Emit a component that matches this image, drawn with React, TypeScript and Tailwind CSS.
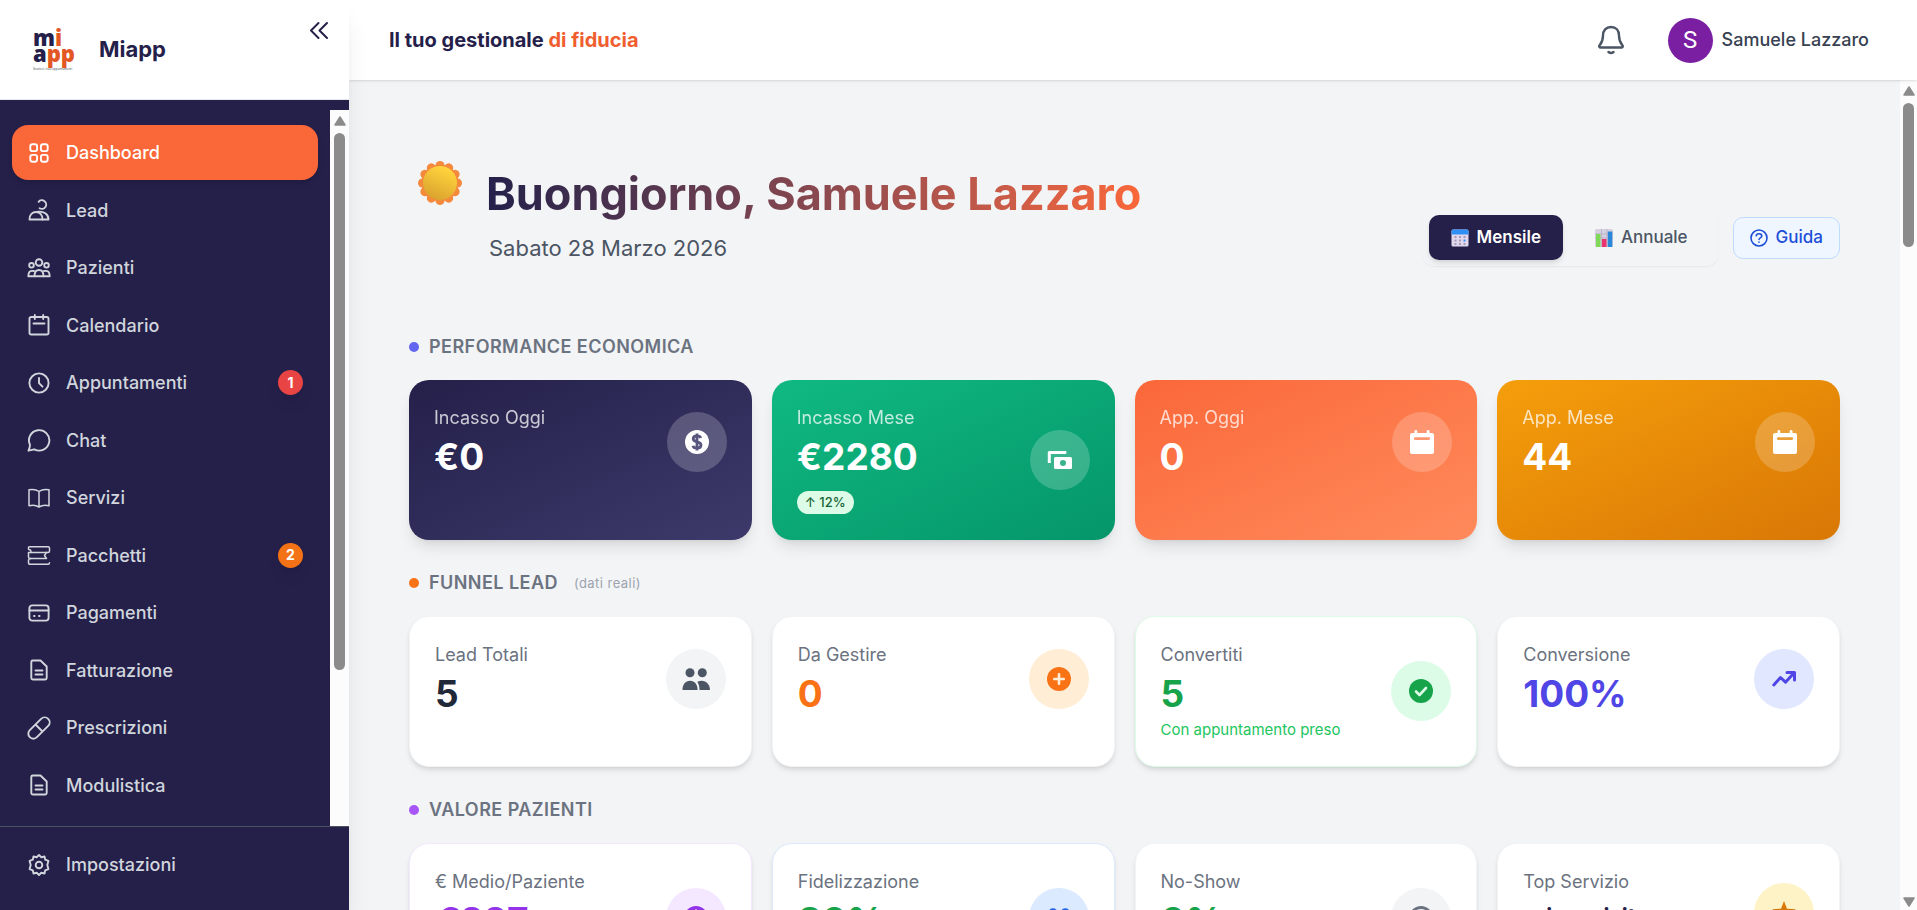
import type { ReactNode } from 'react'

function NavIcon({ children }: { children: ReactNode }) {
    return (
        <svg viewBox="0 0 24 24" className="w-6 h-6 shrink-0" fill="none" stroke="currentColor" strokeWidth="1.9" strokeLinecap="round" strokeLinejoin="round" aria-hidden="true">
            {children}
        </svg>
    )
}

const docIcon = (
    <>
        <path d="M5.8 2.5h7.7l6.2 6V20a1.5 1.5 0 0 1-1.5 1.5H5.8A1.5 1.5 0 0 1 4.3 20V4a1.5 1.5 0 0 1 1.5-1.5z" />
        <path d="M8.5 12.5h7M8.5 16.5h7" />
    </>
)

const menu: { label: string, icon: ReactNode, active?: boolean, badge?: string, badgeClass?: string }[] = [
    {
        label: 'Dashboard', active: true, icon: (
            <>
                <rect x="3.3" y="3.3" width="6.8" height="6.8" rx="2.2" />
                <rect x="13.9" y="3.3" width="6.8" height="6.8" rx="2.2" />
                <rect x="3.3" y="13.9" width="6.8" height="6.8" rx="2.2" />
                <rect x="13.9" y="13.9" width="6.8" height="6.8" rx="2.2" />
            </>
        )
    },
    {
        label: 'Lead', icon: (
            <>
                <path d="M11.6 3.8A4.3 4.3 0 1 1 12.6 10.2" />
                <path d="M2.5 21.5c0-4.8 3-7.5 6.5-7.5s6.5 2.7 6.5 7.5z" />
                <path d="M11 13.7c5.5-.6 10.5 2.2 10.5 7.8h-6" />
            </>
        )
    },
    {
        label: 'Pazienti', icon: (
            <>
                <circle cx="12" cy="6.5" r="3.3" />
                <circle cx="4.5" cy="9.3" r="2.3" />
                <circle cx="19.5" cy="9.3" r="2.3" />
                <path d="M7.5 20.3c0-4.3 1.2-6.3 4.5-6.3s4.5 2 4.5 6.3" />
                <path d="M7 15c-4.5-.8-5.7 1.3-5.7 5.3h21.4c0-4-1.2-6.1-5.7-5.3" />
            </>
        )
    },
    {
        label: 'Calendario', icon: (
            <>
                <rect x="2.5" y="4" width="19" height="17.5" rx="1.8" />
                <path d="M7.8 2v4M16.2 2v4M6.5 10.5h11" />
            </>
        )
    },
    {
        label: 'Appuntamenti', badge: '1', badgeClass: 'bg-[#e94444]', icon: (
            <>
                <circle cx="12" cy="12" r="9.6" />
                <path d="M12 7v5.2l3.5 3.5" />
            </>
        )
    },
    { label: 'Chat', icon: <path d="M3 16.8A10.2 10.2 0 1 1 7.3 21.3L1.5 22.7c.8-1.8 1.5-4 1.5-5.9z" /> },
    {
        label: 'Servizi', icon: (
            <path strokeWidth="1.5" d="M12 5.5C9 3.3 5.5 3 2 3.8v16c3.5-1 7-.7 10 1.2 3-1.9 6.5-2.2 10-1.2v-16c-3.5-.8-7-.5-10 1.7zm0 0V21" />
        )
    },
    {
        label: 'Pacchetti', badge: '2', badgeClass: 'bg-[#f47216]', icon: (
            <g strokeWidth="1.5">
                <path d="M2.5 3.7H21a1.5 1.5 0 0 1 1.5 1.5v2.7A1.5 1.5 0 0 1 21 9.4H4C4 7.5 3.6 6.8 2.5 6.8 1 6.8 1 3.7 2.5 3.7z" />
                <path d="M4 9.4H1.5V14A1.5 1.5 0 0 0 3 15.5h16.5l-2-3 2-3.1" />
                <path d="M4 15.5c-1.7 0-2.5.7-2.5 2.2v2.1A1.5 1.5 0 0 0 3 21.3h18a1.5 1.5 0 0 0 1.5-1.5" />
            </g>
        )
    },
    {
        label: 'Pagamenti', icon: (
            <>
                <rect x="2.4" y="4.4" width="19.2" height="15.2" rx="2.8" />
                <path d="M2.5 9.5h19M7 15h.6M12 15h.6" />
            </>
        )
    },
    { label: 'Fatturazione', icon: docIcon },
    {
        label: 'Prescrizioni', icon: (
            <path d="M2.8 21.2a5 5 0 0 1 0-7.1L14.1 2.8a5 5 0 0 1 7.1 7.1L9.9 21.2a5 5 0 0 1-7.1 0zM8.5 8.5l7 7" />
        )
    },
    { label: 'Modulistica', icon: docIcon },
]

function MiappLogo() {
    return (
        <div className="w-[42px] shrink-0 flex flex-col whitespace-nowrap font-['Open_Sans','Noto_Sans',sans-serif] text-[#24204a]">
            <span className="text-[22px] leading-4 font-extrabold">m<span className="text-[#e25724]">i</span></span>
            <span className="text-[22px] leading-4 font-extrabold">a<span className="text-[#e25724]">pp</span></span>
            <span className="mt-[6px] text-[3px] leading-1 text-gray-700">Gestisci i tuoi appuntamenti</span>
        </div>
    )
}

function Sidebar() {
    return (
        <aside className="w-[349px] shrink-0 flex flex-col bg-[#24204a] shadow-xl z-10">
            <div className="h-[100px] shrink-0 flex items-center bg-white border-b border-gray-200 pl-[33px] pr-5">
                <MiappLogo />
                <span className="ml-6 flex-1 text-[22px] font-bold text-[#24204a]">Miapp</span>
                <button type="button" aria-label="Comprimi menu" className="self-start mt-[21px] text-[#24204a]">
                    <svg viewBox="0 0 20 20" className="w-5 h-5" fill="none" stroke="currentColor" strokeWidth="2" strokeLinecap="round" strokeLinejoin="round" aria-hidden="true">
                        <path d="M9.500 2 2 9.500 9.500 17M18 2l-7.500 7.500L18 17" />
                    </svg>
                </button>
            </div>
            <div className="flex-1 min-h-0 flex pt-[10px]">
                <nav className="flex-1 min-w-0 overflow-hidden px-3 pt-[15px] pb-[13px] flex flex-col justify-between">
                    {menu.map((item) => (
                        <a key={item.label} href="#" className={`h-[55px] shrink-0 flex items-center gap-[15px] px-[15px] rounded-2xl text-[18px] font-medium ${item.active ? 'bg-[#fa6739] text-white shadow-md' : 'text-gray-300'}`}>
                            <NavIcon>{item.icon}</NavIcon>
                            <span className="flex-1">{item.label}</span>
                            {item.badge && (
                                <span className={`w-[25px] h-[25px] flex items-center justify-center rounded-full text-sm font-bold text-white shadow-lg ${item.badgeClass}`}>{item.badge}</span>
                            )}
                        </a>
                    ))}
                </nav>
                <Scrollbar thumb="h-[537px]" />
            </div>
            <div className="h-[84px] shrink-0 border-t border-[#4a5361] px-3 pt-[10px]">
                <a href="#" className="h-[55px] flex items-center gap-[15px] px-[15px] text-[18px] font-medium text-gray-300">
                    <NavIcon>
                        <circle cx="12" cy="12" r="3.3" />
                        <path d="M9.7 4.2 12 2l2.3 2.2 3.2-.7.7 3.2 3.2 1.2L20.3 12l1.1 4.1-3.2 1.2-.7 3.2-3.2-.7L12 22l-2.3-2.2-3.2.7-.7-3.2-3.2-1.2L3.7 12 2.6 7.9l3.2-1.2.7-3.2z" />
                    </NavIcon>
                    <span>Impostazioni</span>
                </a>
            </div>
        </aside>
    )
}

function Scrollbar({ thumb, width = 'w-[19px]', down }: { thumb: string, width?: string, down?: boolean }) {
    return (
        <div className={`shrink-0 flex flex-col items-center bg-[#fcfcfc] pt-[6px] ${width}`} aria-hidden="true">
            <svg viewBox="0 0 12 10" className="w-3 h-[10px]"><path d="M6 1 11 9H1z" fill="#8b8b8b" stroke="#8b8b8b" strokeWidth="1.5" strokeLinejoin="round" /></svg>
            <div className={`w-[11px] mt-[7px] rounded-full bg-[#8b8b8b] ${thumb}`} />
            {down && (
                <svg viewBox="0 0 12 10" className="w-3 h-[10px] mt-auto mb-[3px]"><path d="M6 9 11 1H1z" fill="#8b8b8b" stroke="#8b8b8b" strokeWidth="1.5" strokeLinejoin="round" /></svg>
            )}
        </div>
    )
}

function Topbar() {
    return (
        <header className="h-20 shrink-0 flex items-center bg-white shadow-sm pl-10 pr-12 z-[5]">
            <p className="flex-1 text-xl font-bold text-[#24204a]">Il tuo gestionale <span className="text-[#f05e30]">di fiducia</span></p>
            <button type="button" aria-label="Notifiche" className="mr-[43px] text-[#4b5563]">
                <svg viewBox="0 0 28 30" className="w-7 h-[30px]" fill="none" stroke="currentColor" strokeWidth="2.4" strokeLinecap="round" strokeLinejoin="round" aria-hidden="true">
                    <path d="M14 2c-5 0-8 3.5-8 8.5 0 6-1.5 7.5-3.5 10-.7 1 0 2 1 2h21c1 0 1.7-1 1-2-2-2.5-3.5-4-3.5-10C22 5.5 19 2 14 2zM11.5 27c1.5 1.3 3.5 1.3 5 0" />
                </svg>
            </button>
            <button type="button" className="flex items-center gap-[9px] text-lg font-medium text-[#374151]">
                <span className="w-[45px] h-[45px] flex items-center justify-center rounded-full bg-[#7b1fa2] font-['Roboto',sans-serif] text-2xl font-normal text-white">S</span>
                Samuele Lazzaro
            </button>
        </header>
    )
}

function Sun() {
    return (
        <svg viewBox="0 0 46 46" className="w-[46px] h-[46px]" aria-hidden="true">
            <defs>
                <linearGradient id="sunFace" x1="0.7" y1="0.1" x2="0.3" y2="1">
                    <stop offset="0" stopColor="#ffd33c" />
                    <stop offset="1" stopColor="#d9a12e" />
                </linearGradient>
            </defs>
            <g fill="#f58a3c">
                {[0, 30, 60, 90, 120, 150, 180, 210, 240, 270, 300, 330].map((deg) => (
                    <circle key={deg} cx="23" cy="5.5" r="4.5" transform={`rotate(${deg} 23 23)`} />
                ))}
                <circle cx="23" cy="23" r="18.5" />
            </g>
            <circle cx="23" cy="23" r="17" fill="url(#sunFace)" />
        </svg>
    )
}

function Greeting() {
    return (
        <div className="flex items-end justify-between">
            <div className="flex items-start gap-[23px] pl-2">
                <Sun />
                <div className="pt-2">
                    <h1 className="w-fit text-[45px] leading-[52px] font-bold bg-gradient-to-r from-[#24204a] to-[#fa6739] bg-clip-text text-transparent">Buongiorno, Samuele Lazzaro</h1>
                    <p className="mt-[10px] ml-[3px] text-[22px] leading-9 text-[#4b5563]">Sabato 28 Marzo 2026</p>
                </div>
            </div>
            <div className="flex items-center gap-[15px] text-[17px] font-medium">
                <div className="flex gap-[2px] p-[6px] rounded-xl shadow-xs text-[#4b5563]">
                    <button type="button" className="h-[45px] flex items-center gap-2 px-[22px] rounded-[10px] bg-[#24204a] text-white font-semibold shadow-md">
                        <svg viewBox="0 0 18 18" className="w-[18px] h-[18px]" aria-hidden="true">
                            <rect x="0.5" y="0.5" width="17" height="17" rx="1.5" fill="#e2d8ee" />
                            <path d="M2 .5h14A1.5 1.5 0 0 1 17.5 2v3.5H.5V2A1.5 1.5 0 0 1 2 .5z" fill="#2f8ff5" />
                            <path d="M3.5 8h2M8 8h2M12.5 8h2M3.5 11.5h2M8 11.5h2M3.5 15h2M8 15h2M12.5 15h2" stroke="#a39bb5" strokeWidth="2" />
                            <path d="M12.5 11.5h2" stroke="#2f8ff5" strokeWidth="2" />
                        </svg>
                        Mensile
                    </button>
                    <button type="button" className="h-[45px] flex items-center gap-2 pl-[30px] pr-6">
                        <svg viewBox="0 0 18 18" className="w-[18px] h-[18px]" aria-hidden="true">
                            <rect width="18" height="18" rx="1.5" fill="#d6cfdf" />
                            <path d="M6.5 0v18M12 0v18M0 5h18M0 9h18" stroke="#b9b0c6" strokeWidth="0.8" />
                            <rect x="1" y="5" width="4.5" height="13" fill="#7fd957" />
                            <rect x="7" y="10" width="4.5" height="8" fill="#e8336d" />
                            <rect x="12.8" y="2.5" width="4.5" height="15.5" fill="#2b88d8" />
                        </svg>
                        Annuale
                    </button>
                </div>
                <button type="button" className="h-[42px] flex items-center gap-2 px-4 rounded-[10px] border border-[#bfdbfe] bg-[#eff6ff] text-[#1d4ed8]">
                    <svg viewBox="0 0 18 18" className="w-[18px] h-[18px]" fill="none" stroke="currentColor" strokeWidth="1.6" strokeLinecap="round" aria-hidden="true">
                        <circle cx="9" cy="9" r="8" />
                        <path d="M6.2 6.8C6.5 4 11.8 4 11.8 7c0 1.8-2.8 1.8-2.8 3.5M9 13v.2" />
                    </svg>
                    Guida
                </button>
            </div>
        </div>
    )
}

function SectionTitle({ dot, title, note }: { dot: string, title: string, note?: string }) {
    return (
        <h2 className="flex items-center gap-[10px] mb-[19px] text-lg leading-7 font-semibold uppercase tracking-wide text-[#6b7280]">
            <span className={`w-[10px] h-[10px] rounded-full ${dot}`} />
            {title}
            {note && <span className="ml-[6px] text-[13px] font-normal normal-case text-[#9ca3af]">{note}</span>}
        </h2>
    )
}

type Stat = { label: string, value: string, card: string, valueClass?: string, circle: string, circlePos?: string, icon: ReactNode, note?: ReactNode }

const filledCalendar = <path fillRule="evenodd" d="M4.5 1.3a1.4 1.4 0 0 1 2.8 0V3h9.4V1.3a1.4 1.4 0 0 1 2.8 0V3H22a2 2 0 0 1 2 2v17a2 2 0 0 1-2 2H2a2 2 0 0 1-2-2V5a2 2 0 0 1 2-2h2.5zM5.2 7.2a1.3 1.3 0 0 0 0 2.7h13.6a1.3 1.3 0 0 0 0-2.7z" />

const people = (
    <>
        <circle cx="6" cy="5.8" r="4.5" />
        <circle cx="18.3" cy="5.8" r="4.5" />
        <path d="M-1.5 23c0-5.5 3-9.3 7.6-9.3s7.5 3.8 7.5 9.3zM15.5 23c0-3.5-.8-6.2-2.2-8.3C20 11.5 26 16 26 23z" />
    </>
)

const performance: Stat[] = [
    {
        label: 'Incasso Oggi', value: '€0', card: 'bg-gradient-to-br from-[#24204a] to-[#3d3a6b]', circle: 'bg-white/20 text-white', icon: (
            <>
                <circle cx="12" cy="12" r="12" />
                <path d="M15.8 8c-.6-1.7-2-2.2-3.8-2.2-2.2 0-3.8 1-3.8 2.9 0 4.2 7.8 2.2 7.8 6.4 0 2-1.7 3.1-4 3.1-2.2 0-3.7-.8-4.1-2.5M12 3.5v17" fill="none" stroke="#58557f" strokeWidth="2.8" />
            </>
        )
    },
    {
        label: 'Incasso Mese', value: '€2280', card: 'bg-gradient-to-br from-[#10b981] to-[#059669]', circle: 'bg-white/20 text-white', circlePos: 'mt-[26px]',
        note: <span className="self-start mt-3 h-[23px] flex items-center px-2 rounded-full bg-[#dcfce7] text-[13px] font-medium text-[#166534]">↑ 12%</span>,
        icon: (
            <>
                <path d="M1.3 15V4.5h17" fill="none" stroke="currentColor" strokeWidth="3" strokeLinejoin="round" />
                <path fillRule="evenodd" d="M7.5 9h15a1.5 1.5 0 0 1 1.5 1.5v9a1.5 1.5 0 0 1-1.5 1.5h-15A1.5 1.5 0 0 1 6 19.5v-9A1.5 1.5 0 0 1 7.500 9zm7.500 3a3 3 0 1 0 0 6 3 3 0 0 0 0-6z" />
            </>
        )
    },
    { label: 'App. Oggi', value: '0', card: 'bg-gradient-to-br from-[#fa6739] to-[#ff8a5b]', circle: 'bg-white/20 text-white', icon: filledCalendar },
    { label: 'App. Mese', value: '44', card: 'bg-gradient-to-br from-[#f59e0b] to-[#d97706]', circle: 'bg-white/20 text-white', icon: filledCalendar },
]

const funnel: Stat[] = [
    { label: 'Lead Totali', value: '5', card: 'border-[#f3f4f6]', valueClass: 'text-[#1f2937]', circle: 'bg-[#f3f4f6] text-[#4b5563]', icon: people },
    {
        label: 'Da Gestire', value: '0', card: 'border-[#f3f4f6]', valueClass: 'text-[#f97316]', circle: 'bg-[#ffedd5] text-[#f97316]', icon: (
            <>
                <circle cx="12" cy="12" r="12" />
                <path d="M12 7.3v9.4M7.3 12h9.4" stroke="#ffedd5" strokeWidth="2.6" strokeLinecap="round" />
            </>
        )
    },
    {
        label: 'Convertiti', value: '5', card: 'border-[#dcfce7]', valueClass: 'text-[#16a34a]', circle: 'bg-[#dcfce7] text-[#16a34a]', circlePos: 'mt-5',
        note: <p className="mt-1 text-[15px] leading-5 text-[#22c55e]">Con appuntamento preso</p>,
        icon: (
            <>
                <circle cx="12" cy="12" r="12" />
                <path d="m7 12.5 3.5 3.5L17 9" fill="none" stroke="#dcfce7" strokeWidth="2.6" strokeLinecap="round" strokeLinejoin="round" />
            </>
        )
    },
    {
        label: 'Conversione', value: '100%', card: 'border-[#f3f4f6]', valueClass: 'text-[#4f46e5]', circle: 'bg-[#e0e7ff] text-[#4f46e5]',
        icon: <path d="m1.8 18 6.7-7.5 5 4.7 8-8.7M15 5.500h7.500V13" fill="none" stroke="currentColor" strokeWidth="3" strokeLinecap="round" strokeLinejoin="round" />
    },
]

const patients: Stat[] = [
    { label: '€ Medio/Paziente', value: '€227', card: 'border-[#f3e8ff]', valueClass: 'text-[#9333ea]', circle: 'bg-[#f3e8ff] text-[#9333ea]', circlePos: 'mt-5', icon: <path fillRule="evenodd" d="M12 0a12 12 0 1 0 0 24 12 12 0 0 0 0-24zm-1 3.5h2v17h-2z" /> },
    { label: 'Fidelizzazione', value: '80%', card: 'border-[#dbeafe]', valueClass: 'text-[#16a34a]', circle: 'bg-[#dbeafe] text-[#2563eb]', circlePos: 'mt-5', icon: <g transform="translate(0 1)">{people}</g> },
    { label: 'No-Show', value: '0%', card: 'border-[#f3f4f6]', valueClass: 'text-[#16a34a]', circle: 'bg-[#f3f4f6] text-[#6b7280]', circlePos: 'mt-5', icon: <circle cx="12" cy="12" r="10.5" fill="none" stroke="currentColor" strokeWidth="3" /> },
    { label: 'Top Servizio', value: 'prima visita', card: 'border-[#f3f4f6]', valueClass: 'text-[#24204a]', circle: 'bg-[#fef3c7] text-[#d97706]', circlePos: 'mt-[15px]', icon: <path d="m12 0 3 7.7 8.8.5-6.8 5.5 2.3 8.5-7.3-4.7-7.3 4.7L7 13.7.2 8.200 9 7.700z" /> },
]

function StatGrid({ stats, variant }: { stats: Stat[], variant: 'solid' | 'plain' }) {
    return (
        <div className="grid grid-cols-4 gap-5">
            {stats.map((stat) => (
                <article key={stat.label} className={`flex items-start justify-between rounded-[20px] px-[25px] py-6 ${variant === 'solid' ? 'min-h-[160px] text-white shadow-lg' : 'min-h-[151px] border bg-white shadow-md'} ${stat.card}`}>
                    <div className="flex flex-col">
                        <p className={`text-lg leading-7 ${variant === 'solid' ? 'opacity-75' : 'text-[#6b7280]'}`}>{stat.label}</p>
                        <p className={`font-bold ${stat.value.length > 6 ? 'mt-1 text-[22px] leading-8' : 'mt-[3px] text-[37px] leading-[44px]'} ${stat.valueClass ?? ''}`}>{stat.value}</p>
                        {stat.note}
                    </div>
                    <span className={`w-[60px] h-[60px] shrink-0 flex items-center justify-center rounded-full ${stat.circlePos ?? 'mt-2'} ${stat.circle}`}>
                        <svg viewBox="0 0 24 24" className="w-6 h-6 overflow-visible" fill="currentColor" aria-hidden="true">{stat.icon}</svg>
                    </span>
                </article>
            ))}
        </div>
    )
}

export default function App() {
    return (
        <div className="h-screen flex overflow-hidden bg-[#f3f4f6] font-['Inter','Liberation_Sans',sans-serif]">
            <Sidebar />
            <div className="flex-1 min-w-0 flex flex-col">
                <Topbar />
                <div className="flex-1 min-h-0 flex">
                    <main className="flex-1 min-w-0 overflow-hidden px-[60px] pt-20">
                        <Greeting />
                        <section className="mt-[67px]">
                            <SectionTitle dot="bg-[#6366f1]" title="Performance Economica" />
                            <StatGrid stats={performance} variant="solid" />
                        </section>
                        <section className="mt-[29px]">
                            <SectionTitle dot="bg-[#f97316]" title="Funnel Lead" note="(dati reali)" />
                            <StatGrid stats={funnel} variant="plain" />
                        </section>
                        <section className="mt-[29px]">
                            <SectionTitle dot="bg-[#a855f7]" title="Valore Pazienti" />
                            <StatGrid stats={patients} variant="plain" />
                        </section>
                    </main>
                    <Scrollbar thumb="h-[144px]" width="w-[17px]" down />
                </div>
            </div>
        </div>
    )
}
